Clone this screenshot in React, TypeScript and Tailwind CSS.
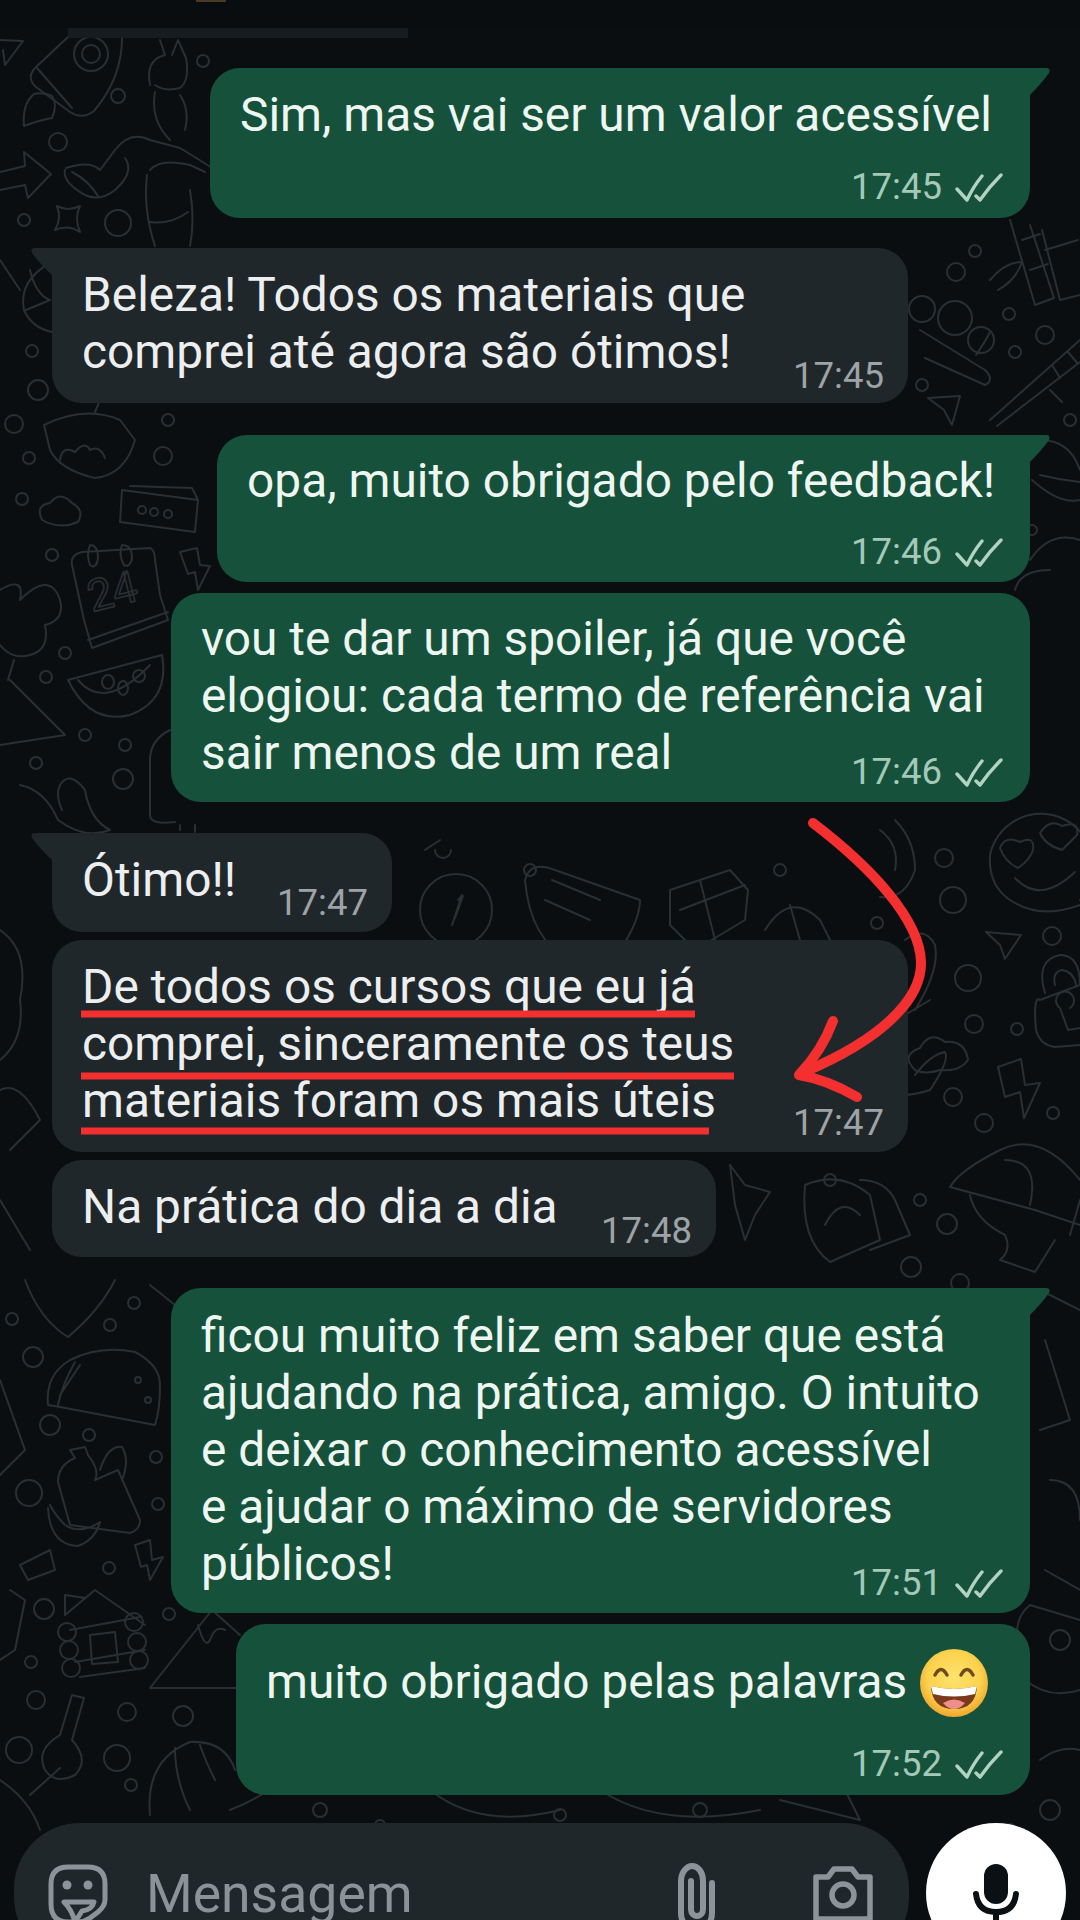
import React from 'react';

interface Message {
  side: 'in' | 'out';
  lines: string[];
  time: string;
  tail?: boolean;
  emoji?: boolean;
  box: string;
  timeBox: string;
}

const messages: Message[] = [
  { side: 'out', tail: true, lines: ['Sim, mas vai ser um valor acessível'], time: '17:45', box: 'w-[820px] mt-[30px] pt-[19px] pb-[12px]', timeBox: 'mt-[22px]' },
  { side: 'in', tail: true, lines: ['Beleza! Todos os materiais que', 'comprei até agora são ótimos!'], time: '17:45', box: 'w-[856px] mt-[30px] pt-[19px] pb-[8px]', timeBox: 'mt-[-26px]' },
  { side: 'out', tail: true, lines: ['opa, muito obrigado pelo feedback!'], time: '17:46', box: 'w-[813px] mt-[32px] pt-[18px] pb-[11px]', timeBox: 'mt-[21px]' },
  { side: 'out', lines: ['vou te dar um spoiler, já que você', 'elogiou: cada termo de referência vai', 'sair menos de um real'], time: '17:46', box: 'w-[859px] mt-[11px] pt-[18px] pb-[11px]', timeBox: 'mt-[-31px]' },
  { side: 'in', tail: true, lines: ['Ótimo!!'], time: '17:47', box: 'w-[340px] mt-[31px] pt-[19px] pb-[10px]', timeBox: 'mt-[-27px]' },
  { side: 'in', lines: ['De todos os cursos que eu já', 'comprei, sinceramente os teus', 'materiais foram os mais úteis'], time: '17:47', box: 'w-[856px] mt-[8px] pt-[19px] pb-[10px]', timeBox: 'mt-[-28px]' },
  { side: 'in', lines: ['Na prática do dia a dia'], time: '17:48', box: 'w-[664px] mt-[8px] pt-[19px] pb-[7px]', timeBox: 'mt-[-26px]' },
  { side: 'out', tail: true, lines: ['ficou muito feliz em saber que está', 'ajudando na prática, amigo. O intuito', 'e deixar o conhecimento acessível', 'e ajudar o máximo de servidores', 'públicos!'], time: '17:51', box: 'w-[859px] mt-[31px] pt-[20px] pb-[11px]', timeBox: 'mt-[-31px]' },
  { side: 'out', emoji: true, lines: ['muito obrigado pelas palavras'], time: '17:52', box: 'w-[794px] mt-[11px] pt-[30px] pb-[12px]', timeBox: 'mt-[32px]' },
];

const dots: number[][] = [
  [118, 96, 7], [58, 142, 9], [203, 61, 6], [24, 220, 6], [118, 223, 13], [32, 351, 6], [38, 390, 10],
  [975, 251, 6], [956, 272, 9], [1009, 314, 6], [1045, 335, 9], [1015, 352, 6], [922, 385, 6], [1070, 420, 6], [1032, 530, 5],
  [922, 309, 13], [955, 318, 17], [981, 340, 13],
  [944, 858, 9], [953, 900, 13], [877, 923, 6], [1052, 936, 9], [968, 978, 13], [974, 1024, 9], [1017, 1029, 6],
  [953, 1097, 9], [984, 1123, 9], [1053, 1113, 6], [920, 1200, 6], [947, 1224, 10], [911, 1267, 10], [960, 1283, 9],
  [134, 1303, 6], [12, 1319, 6], [110, 1325, 6], [33, 1357, 10], [50, 1425, 10], [89, 1435, 6], [156, 1457, 6], [29, 1493, 13],
  [158, 1504, 6], [109, 1568, 6], [44, 1609, 10], [169, 1614, 6], [31, 1662, 6], [36, 1700, 9], [127, 1712, 9], [19, 1750, 13],
  [183, 1716, 10], [117, 1758, 13], [131, 1785, 6],
  [14, 424, 9], [29, 458, 6], [168, 420, 6], [163, 456, 9], [22, 499, 6], [52, 555, 6], [65, 653, 6], [46, 677, 6],
  [85, 735, 6], [125, 745, 6], [36, 763, 6], [123, 779, 10],
  [530, 870, 6], [780, 870, 6], [660, 1180, 6], [830, 1180, 6], [1000, 1700, 9], [1060, 1640, 10], [1050, 1810, 10], [1010, 1830, 6],
  [700, 1810, 7], [320, 1810, 7], [380, 1825, 5], [560, 1815, 6],
];

const doodles: string[] = [
  // rocket
  'M69 36 L35 68 Q26 78 36 87 L70 112 Q82 120 94 111 Q122 78 122 38',
  'M37 68 L72 108',
  'M34 94 Q22 104 24 126 Q40 120 52 118 Q58 104 52 96 Q44 92 34 94Z',
  'M74 54a17 17 0 1 0 34 0a17 17 0 1 0 -34 0',
  'M82 54a9 9 0 1 0 18 0a9 9 0 1 0 -18 0',
  // plane top left
  'M0 40 L23 41 L5 65 L3 50',
  // arrow
  'M0 172 L25 166 L24 152 L51 174 L28 198 L25 185 L0 190',
  // star
  'M57 206 Q68 212 80 206 Q74 218 80 232 Q68 224 55 230 Q62 218 57 206Z',
  // heart, hand, arm
  'M66 168 Q90 160 100 170 L115 150 Q130 130 150 140 L180 148 Q200 160 215 170',
  'M65 170 Q62 182 85 195 Q100 202 115 190 Q135 172 125 158',
  'M72 172 Q88 180 98 196',
  'M150 170 Q160 158 190 165 L205 172 M147 175 Q143 210 155 246 M190 190 Q195 220 190 246 M150 222 Q170 225 188 212',
  'M150 85 Q145 60 165 55 L160 40 M172 55 L178 40 L186 58 Q190 80 180 88 Q165 92 155 85 M155 92 Q150 120 170 140 M180 95 Q190 110 185 130',
  // globe under bubble
  'M52 262 Q18 280 24 310 Q32 328 52 332 M30 270 Q36 295 50 300 M26 310 L50 300',
  // candy and bits right of bubble 2
  'M920 330 L985 370 Q995 380 985 385 L925 358',
  'M976 355 Q985 342 990 332',
  'M928 398 L960 396 L952 425 L944 410Z',
  // bamboo
  'M1010 220 L1035 305 L1054 298 L1030 225 M1022 240 L1040 234 M1030 270 L1048 264 M1042 230 L1060 300 L1080 295 M1045 250 L1078 240',
  'M990 280 Q1005 262 1022 262 Q1016 280 998 290',
  // chopsticks
  'M990 420 L1080 340 M997 426 L1080 362 M1052 365 L1060 378 M1068 352 L1078 364 M1050 390 L1062 402',
  // shell bottom right
  'M1040 440 Q1070 440 1080 470 M1032 480 Q1060 505 1080 500 M1040 475 Q1060 480 1080 482',
  'M1030 560 Q1050 530 1080 540 M1015 590 Q1020 570 1050 570',
  // bowl
  'M44 425 Q85 405 120 420 L135 440 Q125 475 95 478 Q60 470 50 450Z',
  'M60 460 Q62 445 75 452 Q85 440 90 450 Q100 445 105 458 M95 412 L100 400',
  // cloud
  'M42 520 Q35 505 50 503 Q60 490 72 503 Q85 510 78 522 Q60 530 42 520Z',
  // pill box
  'M122 490 L198 500 L195 532 L120 522Z M198 500 L192 488 L130 486 M138 510a4 4 0 1 0 8 0a4 4 0 1 0 -8 0 M150 512a4 4 0 1 0 8 0a4 4 0 1 0 -8 0 M164 514a4 4 0 1 0 8 0a4 4 0 1 0 -8 0',
  // calendar
  'M72 565 Q70 555 82 552 L150 548 Q155 550 155 560 L160 595 L168 620 L92 648 L84 620Z',
  'M88 640 L168 612',
  'M90 545 Q98 545 98 558 Q96 570 90 565 Q86 555 90 545 M122 545 Q132 545 132 558 Q130 568 124 565 Q118 555 122 545',
  // watermelon
  'M68 680 L162 655 Q170 700 130 715 Q90 725 68 680Z M78 680 Q105 712 150 665',
  'M102 682a6 7 0 1 0 12 0a6 7 0 1 0 -12 0 M118 688a5 7 0 1 0 10 0a5 7 0 1 0 -10 0 M133 676a6 6 0 1 0 12 0a6 6 0 1 0 -12 0',
  // lightning bits
  'M180 552 L197 548 L200 565 L210 566 L198 590 L195 572 L188 574Z',
  'M998 1067 L1021 1059 L1025 1085 L1040 1083 L1024 1118 L1020 1092 L1005 1097Z',
  'M135 1545 L150 1540 L152 1560 L163 1557 L150 1580 L147 1565 L141 1567Z',
  // broccoli and mountain left
  'M0 590 Q25 575 20 600 Q50 570 60 600 Q65 620 45 625 Q50 650 30 655 Q12 660 0 645 M14 660 L8 680',
  'M10 680 L65 735 L0 745',
  // eggplants
  'M20 785 Q45 790 58 820 Q85 840 110 830 Q90 820 85 790 Q70 770 60 785 Q55 795 62 810',
  // popsicle behind bubble 4
  'M170 730 Q150 740 150 760 L150 815 Q150 825 175 822 M180 825 V830 M195 825 V832',
  // heart smiley
  'M990 855 A52 52 0 1 1 1080 900 M990 855 Q988 885 1010 900 Q1040 920 1080 905',
  'M1000 848 Q1005 835 1020 842 Q1035 835 1033 850 Q1030 860 1018 868 Q1005 862 1000 848Z',
  'M1040 833 Q1050 818 1062 826 Q1080 820 1077 835 L1062 850 Q1045 845 1040 833Z',
  'M1015 878 Q1040 905 1075 872',
  // plane right
  'M986 932 L1021 935 L1005 959 L1000 945Z',
  // lock
  'M1040 1000 Q1033 995 1036 1030 Q1040 1045 1055 1047 L1080 1045 M1040 1000 L1080 985 M1045 993 Q1035 960 1060 955 Q1080 955 1080 985 M1055 985 Q1052 972 1062 970 Q1074 972 1076 985',
  'M1070 1008a9 9 0 1 0 -10 0 L1068 1030 L1080 1028',
  // cloud right
  'M915 1070 Q900 1055 920 1048 Q930 1030 945 1042 Q965 1040 968 1060 Q960 1072 940 1070 Q925 1075 915 1070Z',
  // fist
  'M905 940 Q925 925 935 945 Q940 970 915 1010 M905 1015 L930 1000 M880 1090 Q900 1100 930 1090 Q950 1060 945 1052 Q930 1055 915 1075',
  'M1080 1180 Q1040 1130 1000 1150 Q960 1170 950 1187 L1035 1210 L1080 1225',
  'M1030 1205 Q1040 1160 1005 1160 M970 1195 Q975 1220 1005 1235 Q1012 1250 1000 1260 L1035 1272 L1055 1240 M1070 1235 L1080 1200',
  'M860 1180 Q885 1180 895 1200 L910 1235 L870 1250',
  // fire
  'M895 820 Q915 840 915 870 Q905 900 880 897 M880 830 Q900 845 895 870',
  // between bubbles: compass, bag, box, clock
  'M420 910a36 36 0 1 0 72 0a36 36 0 1 0 -72 0 M452 925 L462 895 L458 900 M455 918 L463 896',
  'M440 840 L425 850 M435 850a8 8 0 1 0 16 0',
  'M525 880 Q530 860 555 870 L640 900 Q640 920 620 950 L570 960 Q530 940 525 880Z M552 880 L600 900 M545 900 L590 920',
  'M670 890 L730 870 L748 890 L745 920 L695 950 L670 925Z M700 880 L715 940 M680 910 L745 885',
  'M765 930 Q790 890 820 920 L830 940 M790 905 L800 940',
  // right of last incoming
  'M730 1165 L745 1185 L770 1192 L755 1215 L745 1240 L735 1205Z',
  'M805 1185 Q840 1170 870 1195 L880 1240 L830 1262 Q800 1240 805 1185Z M825 1225 Q840 1195 860 1215',
  // shield
  'M25 1280 Q40 1320 68 1337 Q100 1310 115 1280',
  'M150 1285 L175 1305',
  // taco
  'M48 1405 Q45 1375 70 1360 Q100 1345 135 1352 Q160 1365 160 1385 Q160 1410 155 1425 L60 1407Z',
  'M75 1362 Q62 1385 58 1405 M60 1395 Q70 1380 80 1365 M135 1380a3 3 0 1 0 6 0a3 3 0 1 0 -6 0 M145 1400a3 3 0 1 0 6 0a3 3 0 1 0 -6 0',
  // bag, bottle, banana
  'M58 1482 Q58 1465 75 1458 L70 1450 L85 1447 L88 1455 Q100 1470 95 1480 L118 1470 L140 1520 Q140 1530 130 1533 L70 1525Z',
  'M100 1470 Q108 1445 122 1447 Q130 1460 122 1480',
  'M48 1508 Q50 1545 78 1546 Q95 1540 100 1522 Q80 1535 65 1525 Q55 1515 50 1505',
  // small tag
  'M20 1565 L50 1550 L55 1570 L28 1580Z',
  // cabin
  'M65 1615 L95 1590 L145 1625 M65 1615 V1595 L85 1598',
  'M70 1630 L140 1617 M75 1662 L145 1650 M80 1677 L145 1668',
  'M90 1635 L115 1632 L118 1662 L92 1664Z',
  'M58 1632a9 9 0 1 0 18 0a9 9 0 1 0 -18 0 M60 1650a9 9 0 1 0 18 0a9 9 0 1 0 -18 0 M62 1668a9 9 0 1 0 18 0a9 9 0 1 0 -18 0 M125 1622a9 9 0 1 0 18 0a9 9 0 1 0 -18 0 M128 1642a9 9 0 1 0 18 0a9 9 0 1 0 -18 0 M130 1660a9 9 0 1 0 18 0a9 9 0 1 0 -18 0',
  // mountain
  'M150 1688 L212 1610 L240 1635 M150 1688 H240 M198 1625 Q205 1650 210 1640 Q215 1625 225 1630',
  // guitar
  'M72 1695 L84 1698 L72 1740 Q90 1760 75 1775 Q55 1785 45 1770 Q35 1750 60 1735Z M60 1768 L30 1795',
  // shrimp
  'M150 1815 Q145 1760 190 1742 Q225 1740 235 1770 M175 1748 Q175 1780 190 1810 M200 1745 Q205 1760 215 1780',
  // bottom band
  'M230 1810 Q280 1790 300 1760 M430 1790 Q480 1830 560 1810 M600 1790 Q660 1830 760 1810 M780 1800 L860 1820 L840 1780',
  'M1020 1660 Q1010 1620 1030 1605 L1080 1620 M1025 1680 Q1050 1700 1080 1690 M1040 1760 Q1060 1745 1080 1750',
  'M1040 1290 L1080 1310 M1045 1340 L1070 1420 L1040 1430 M1050 1480 Q1080 1480 1080 1520 M1045 1570 L1080 1590',
  'M0 260 L20 290 M0 930 Q30 950 20 1000 Q25 1040 0 1060 M0 1090 Q20 1080 40 1120 L10 1150 M0 1200 L30 1250 M0 1380 L25 1450 L0 1475',
  'M10 1590 L25 1600 L15 1650 L0 1660 M0 1780 Q30 1800 40 1830',
];

const Wallpaper = () => (
  <svg className="absolute inset-0" width="1080" height="1920" viewBox="0 0 1080 1920" fill="none" stroke="#2a2f33" strokeWidth="2" strokeLinecap="round" strokeLinejoin="round">
    {doodles.map((d, i) => (
      <path key={i} d={d} />
    ))}
    {dots.map(([x, y, r], i) => (
      <circle key={i} cx={x} cy={y} r={r} />
    ))}
    <text x="92" y="612" fontFamily="Roboto" fontSize="44" transform="rotate(-14 92 612)" strokeWidth="1.6">24</text>
  </svg>
);

const Ticks = () => (
  <svg width="48" height="30" viewBox="0 0 48 30" fill="none" stroke="#b2d2c4" strokeWidth="3.4" strokeLinecap="round" strokeLinejoin="round">
    <path d="M2 16 L12 27 Q18 14 27 3" />
    <path d="M21 23 L25 27 Q34 14 46 2" />
  </svg>
);

const Tail = ({ side }: { side: 'in' | 'out' }) =>
  side === 'out' ? (
    <svg className="absolute top-0 right-[-21px]" width="22" height="30" viewBox="0 0 22 30">
      <path d="M0 0 H17 Q22 0 20 5 Q12 16 0 28 Z" fill="#16523b" />
    </svg>
  ) : (
    <svg className="absolute top-0 left-[-22px]" width="23" height="30" viewBox="0 0 23 30">
      <path d="M23 0 H5 Q0 0 2 5 Q10 16 23 28 Z" fill="#20272a" />
    </svg>
  );

const GrinEmoji = () => (
  <svg width="68" height="68" viewBox="0 0 68 68" className="shrink-0">
    <defs>
      <radialGradient id="grin" cx="50%" cy="42%" r="60%">
        <stop offset="0%" stopColor="#fde36c" />
        <stop offset="65%" stopColor="#fbd24d" />
        <stop offset="100%" stopColor="#eda22a" />
      </radialGradient>
    </defs>
    <circle cx="34" cy="34" r="34" fill="url(#grin)" />
    <path d="M11 37 Q34 43 57 37 Q56 60 34 60 Q12 60 11 37Z" fill="#7b3a1c" />
    <path d="M23 54 Q34 47 45 54 Q40 60 34 60 Q28 60 23 54Z" fill="#ee8f8a" />
    <path d="M11 37 Q34 43 57 37 L55 45 Q34 50 13 45Z" fill="#ffffff" />
    <path d="M15 26 Q21 15 27 26" fill="none" stroke="#6f4a1d" strokeWidth="3.5" strokeLinecap="round" />
    <path d="M41 26 Q47 15 53 26" fill="none" stroke="#6f4a1d" strokeWidth="3.5" strokeLinecap="round" />
  </svg>
);

const Bubble = ({ message }: { message: Message }) => {
  const out = message.side === 'out';
  const corners = message.tail ? (out ? 'rounded-tr-none' : 'rounded-tl-none') : '';
  return (
    <div
      className={`relative shrink-0 rounded-[30px] pl-[30px] ${corners} ${message.box} ${
        out ? 'self-end bg-[#16523b] text-[#eef6f1]' : 'self-start bg-[#20272a] text-[#eceeef]'
      }`}
    >
      {message.tail && <Tail side={message.side} />}
      {message.lines.map((line) => (
        <div key={line} className="flex h-[57px] items-center gap-[13px] whitespace-nowrap text-[47.85px] leading-[57px]">
          {line}
          {message.emoji && <GrinEmoji />}
        </div>
      ))}
      <div className={`relative flex h-[40px] items-center justify-end gap-[13px] pt-[3px] text-[36.5px] ${message.timeBox} ${out ? 'pr-[27px] text-[#a4c9b9]' : 'pr-[24px] text-[#9da3a6]'}`}>
        <span>{message.time}</span>
        {out && <Ticks />}
      </div>
    </div>
  );
};

const Annotations = () => (
  <svg className="absolute inset-0" width="1080" height="1920" viewBox="0 0 1080 1920" fill="none" stroke="#f3302f" strokeLinecap="round" strokeLinejoin="round">
    <path d="M81 1014 H695 M81 1076 H734 M81 1131 H709" strokeWidth="7" strokeLinecap="butt" />
    <path d="M813 823 C872 868 920 920 921 962 C922 1000 880 1040 804 1072" strokeWidth="10" />
    <path d="M833 1021 C826 1040 815 1058 799 1075 C818 1078 838 1086 857 1097" strokeWidth="10" />
  </svg>
);

const InputBar = () => (
  <div className="mt-[28px] flex shrink-0 gap-[17px] pl-[14px]">
    <div className="relative flex h-[140px] w-[895px] items-start rounded-[66px] bg-[#1f272a] pl-[34px] pt-[41px]">
      <svg width="60" height="60" viewBox="0 0 60 60" fill="none" stroke="#8b9599" strokeWidth="5" strokeLinecap="round" strokeLinejoin="round" className="shrink-0">
        <path d="M3 20 Q3 3 20 3 H40 Q57 3 57 20 V36 Q57 42 50 48 L42 54 Q36 58 30 58 H20 Q3 58 3 40 Z" />
        <path d="M16 38 H46 Q44 46 34 47 L27 58 Q24 46 16 38 Z" />
        <circle cx="19" cy="21" r="4.5" fill="#8b9599" stroke="none" />
        <circle cx="40" cy="21" r="4.5" fill="#8b9599" stroke="none" />
      </svg>
      <span className="ml-[38px] mt-[-2px] text-[53.5px] leading-[64px] text-[#8a9498]">Mensagem</span>
      <svg width="40" height="72" viewBox="0 0 40 72" fill="none" stroke="#8b9599" strokeWidth="6" strokeLinecap="round" strokeLinejoin="round" className="absolute left-[663px] top-[40px]">
        <path d="M35 20 V50 C35 60 28 67 20 67 C11 67 4 60 4 50 V18 C4 9 10 3 15 3 C21 3 26 9 26 18 V46 C26 50 24 53 20 53 C16 53 14 50 14 46 V18" />
      </svg>
      <svg width="62" height="56" viewBox="0 0 62 56" fill="none" stroke="#8b9599" strokeWidth="5.5" strokeLinejoin="round" className="absolute left-[798px] top-[43px]">
        <path d="M4 11 H16 L22 3 H40 L46 11 H58 V53 H4 Z" />
        <circle cx="31" cy="29" r="11" />
      </svg>
    </div>
    <div className="flex h-[140px] w-[140px] shrink-0 justify-center rounded-full bg-white pt-[41px]">
      <svg width="48" height="60" viewBox="0 0 48 60" fill="none" stroke="#0b1014" strokeWidth="6" strokeLinecap="round">
        <rect x="12" y="0" width="24" height="40" rx="12" fill="#0b1014" stroke="none" />
        <path d="M4 30 Q6 48 24 48 Q42 48 44 30" />
        <path d="M24 48 V60" strokeLinecap="butt" />
      </svg>
    </div>
  </div>
);

export default function App() {
  return (
    <div className="relative h-[1920px] w-[1080px] overflow-hidden bg-[#0a0e11] font-['Roboto',sans-serif]">
      <Wallpaper />
      <div className="relative flex h-full flex-col">
        <div className="h-[28px] shrink-0 bg-[#090d10] pl-[196px]">
          <div className="h-[2px] w-[30px] bg-[#4a3a24]" />
        </div>
        <div className="ml-[68px] h-[10px] w-[340px] shrink-0 bg-[#161c1f]" />
        <div className="flex shrink-0 flex-col pl-[52px] pr-[50px]">
          {messages.map((message) => (
            <Bubble key={message.lines[0]} message={message} />
          ))}
        </div>
        <InputBar />
      </div>
      <Annotations />
    </div>
  );
}
